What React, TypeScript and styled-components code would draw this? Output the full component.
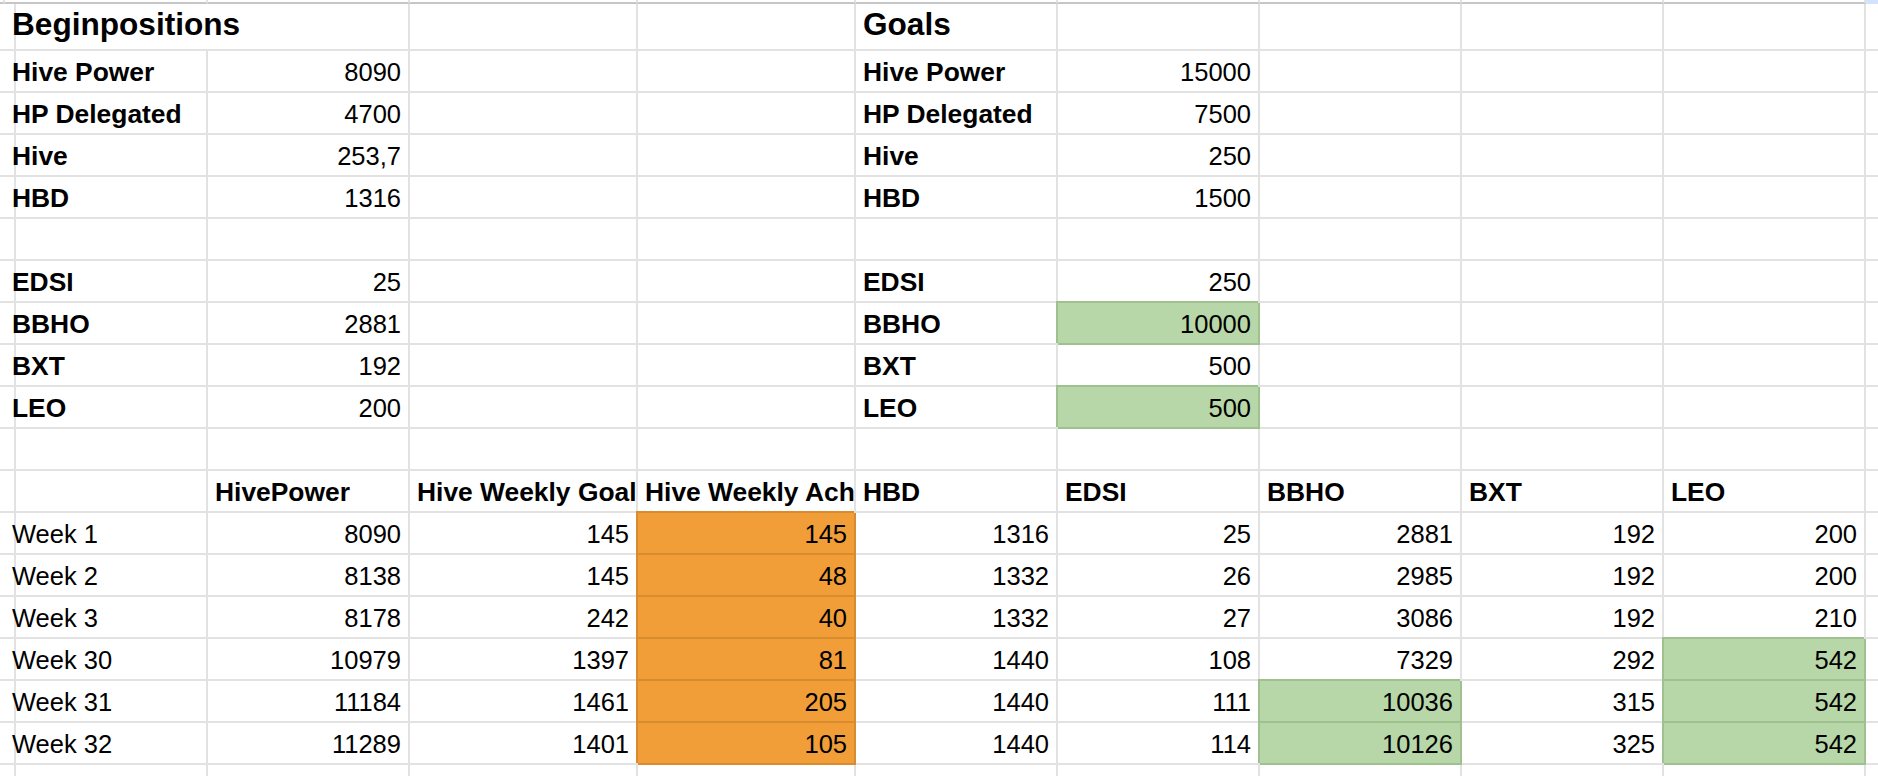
import React from "react";
import styled, { createGlobalStyle } from "styled-components";

const GRID = "#e2e2e2";
const COLS = "5px 203px 202px 228px 218px 202px 202px 202px 202px 202px 202px";

const Global = createGlobalStyle`
  html, body { margin: 0; padding: 0; background: #fff; overflow: hidden; }
  body {
    font-family: "Liberation Sans", Arial, Helvetica, sans-serif;
    color: #000;
  }
`;

const Sheet = styled.div`
  width: 1878px;
  height: 776px;
  overflow: hidden;
  display: flex;
  flex-direction: column;
  background: #fff;
`;

const Row = styled.div<{ $h?: number }>`
  display: grid;
  grid-template-columns: ${COLS};
  width: max-content;
  flex: ${(p) => (p.$h ? "none" : "1")};
  height: ${(p) => (p.$h ? `${p.$h}px` : "auto")};
`;

const TopCell = styled.div<{ $selected?: boolean }>`
  box-sizing: border-box;
  border-right: 2px solid ${GRID};
  border-bottom: 2px solid ${(p) => (p.$selected ? "#d3e3fd" : "#c6c6c6")};
  background: ${(p) => (p.$selected ? "#d3e3fd" : "#fff")};
`;

type Fill = "orange" | "green";
const FILLS: Record<Fill, { bg: string; line: string }> = {
  orange: { bg: "#f19e39", line: "#d88c30" },
  green: { bg: "#b7d7a8", line: "#9fc18f" },
};

const Cell = styled.div<{
  $right?: boolean;
  $bold?: boolean;
  $title?: boolean;
  $fill?: Fill;
  $span?: number;
  $open?: boolean;
}>`
  box-sizing: border-box;
  min-width: 0;
  display: flex;
  align-items: flex-end;
  justify-content: ${(p) => (p.$right ? "flex-end" : "flex-start")};
  padding: 0 7px ${(p) => (p.$title ? 8 : 6)}px 7px;
  grid-column: span ${(p) => p.$span ?? 1};
  border-right: 2px solid ${(p) => (p.$fill ? FILLS[p.$fill].line : GRID)};
  border-bottom: ${(p) => (p.$open ? "none" : `2px solid ${p.$fill ? FILLS[p.$fill].line : GRID}`)};
  background: ${(p) => (p.$fill ? FILLS[p.$fill].bg : "transparent")};
  box-shadow: ${(p) => (p.$fill ? `-2px -2px 0 0 ${FILLS[p.$fill].line}` : "none")};
  overflow: hidden;
  white-space: nowrap;
  font-size: ${(p) => (p.$title ? 31.6 : p.$bold ? 26.4 : 25.5)}px;
  font-weight: ${(p) => (p.$bold || p.$title ? 700 : 400)};
  line-height: 1;
`;

type C = {
  t?: string;
  r?: boolean;
  b?: boolean;
  title?: boolean;
  f?: Fill;
  s?: number;
  skip?: boolean;
};

const E: C = {};
const empties = (n: number): C[] => Array.from({ length: n }, () => ({}));

const pair = (l1: string, v1: string, l2: string, v2: string, f2?: Fill): C[] => [
  { t: l1, b: true },
  { t: v1, r: true },
  E,
  E,
  { t: l2, b: true },
  { t: v2, r: true, f: f2 },
  ...empties(4),
];

const week = (
  label: string,
  vals: string[],
  fills: (Fill | undefined)[] = []
): C[] => [
  { t: label },
  ...vals.map((v, i) => ({ t: v, r: true, f: i === 2 ? "orange" : fills[i] } as C)),
  E,
];

const ROWS: { h: number; cells: C[] }[] = [
  {
    h: 47,
    cells: [
      { t: "Beginpositions", title: true, s: 2 },
      { skip: true },
      E,
      E,
      { t: "Goals", title: true },
      ...empties(5),
    ],
  },
  { h: 42, cells: pair("Hive Power", "8090", "Hive Power", "15000") },
  { h: 42, cells: pair("HP Delegated", "4700", "HP Delegated", "7500") },
  { h: 42, cells: pair("Hive", "253,7", "Hive", "250") },
  { h: 42, cells: pair("HBD", "1316", "HBD", "1500") },
  { h: 42, cells: empties(10) },
  { h: 42, cells: pair("EDSI", "25", "EDSI", "250") },
  { h: 42, cells: pair("BBHO", "2881", "BBHO", "10000", "green") },
  { h: 42, cells: pair("BXT", "192", "BXT", "500") },
  { h: 42, cells: pair("LEO", "200", "LEO", "500", "green") },
  { h: 42, cells: empties(10) },
  {
    h: 42,
    cells: [
      E,
      ...["HivePower", "Hive Weekly Goal", "Hive Weekly Ach", "HBD", "EDSI", "BBHO", "BXT", "LEO"].map(
        (t) => ({ t, b: true } as C)
      ),
      E,
    ],
  },
  { h: 42, cells: week("Week 1", ["8090", "145", "145", "1316", "25", "2881", "192", "200"]) },
  { h: 42, cells: week("Week 2", ["8138", "145", "48", "1332", "26", "2985", "192", "200"]) },
  { h: 42, cells: week("Week 3", ["8178", "242", "40", "1332", "27", "3086", "192", "210"]) },
  {
    h: 42,
    cells: week(
      "Week 30",
      ["10979", "1397", "81", "1440", "108", "7329", "292", "542"],
      [undefined, undefined, undefined, undefined, undefined, undefined, undefined, "green"]
    ),
  },
  {
    h: 42,
    cells: week(
      "Week 31",
      ["11184", "1461", "205", "1440", "111", "10036", "315", "542"],
      [undefined, undefined, undefined, undefined, undefined, "green", undefined, "green"]
    ),
  },
  {
    h: 42,
    cells: week(
      "Week 32",
      ["11289", "1401", "105", "1440", "114", "10126", "325", "542"],
      [undefined, undefined, undefined, undefined, undefined, "green", undefined, "green"]
    ),
  },
];

export default function App() {
  return (
    <>
      <Global />
      <Sheet>
        <Row $h={4}>
          {Array.from({ length: 11 }, (_, i) => (
            <TopCell key={i} $selected={i === 10} />
          ))}
        </Row>
        {ROWS.map((row, ri) => (
          <Row key={ri} $h={row.h}>
            <Cell />
            {row.cells
              .filter((c) => !c.skip)
              .map((c, ci) => (
                <Cell
                  key={ci}
                  $right={c.r}
                  $bold={c.b}
                  $title={c.title}
                  $fill={c.f}
                  $span={c.s}
                >
                  {c.t ? <span>{c.t}</span> : null}
                </Cell>
              ))}
          </Row>
        ))}
        <Row>
          {Array.from({ length: 11 }, (_, i) => (
            <Cell key={i} $open />
          ))}
        </Row>
      </Sheet>
    </>
  );
}
